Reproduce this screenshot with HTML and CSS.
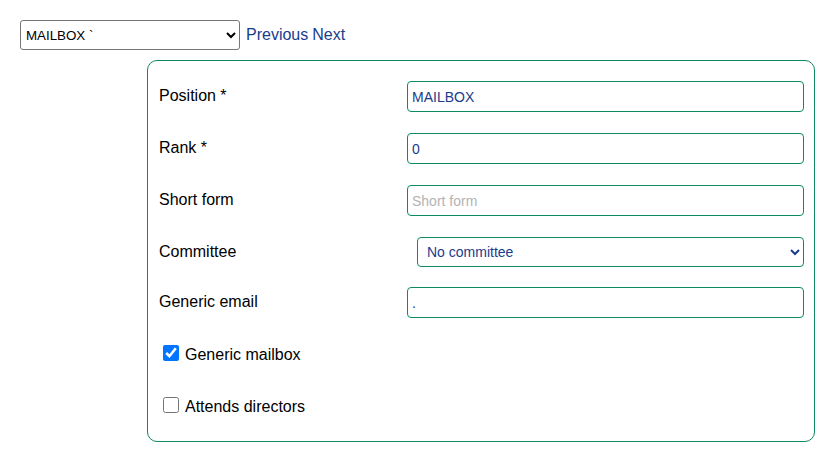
FILE: index.html
```html
<!DOCTYPE html>
<html lang="en">
<head>
<meta charset="utf-8">
<title>Position</title>
<link rel="stylesheet" href="styles.css">
</head>
<body>
<div class="topbar">
  <select class="picker">
    <option>MAILBOX `</option>
  </select>
  <a class="nav" href="#">Previous</a>
  <a class="nav" href="#">Next</a>
</div>
<form class="card">
  <div class="row">
    <label class="lbl">Position *</label>
    <input class="field" type="text" value="MAILBOX">
  </div>
  <div class="row">
    <label class="lbl">Rank *</label>
    <input class="field" type="text" value="0">
  </div>
  <div class="row">
    <label class="lbl">Short form</label>
    <input class="field" type="text" placeholder="Short form">
  </div>
  <div class="row row-select">
    <label class="lbl">Committee</label>
    <select class="field sel">
      <option>No committee</option>
    </select>
  </div>
  <div class="row">
    <label class="lbl">Generic email</label>
    <input class="field" type="text" value=".">
  </div>
  <div class="row check-row">
    <label class="check"><input type="checkbox" checked><span>Generic mailbox</span></label>
  </div>
  <div class="row check-row last">
    <label class="check"><input type="checkbox"><span>Attends directors</span></label>
  </div>
</form>
</body>
</html>
```
FILE: styles.css
```css
html, body {
  margin: 0;
  padding: 0;
  background: #ffffff;
}
body {
  font-family: "Liberation Sans", Arial, sans-serif;
  font-size: 16px;
  color: #000;
  padding: 20px;
}
.topbar {
  display: flex;
  align-items: center;
  height: 30px;
  gap: 4px;
}
.picker {
  width: 220px;
  height: 30px;
  font-family: "Liberation Sans", Arial, sans-serif;
  font-size: 13.33px;
  color: #000;
  border: 1px solid #767676;
  border-radius: 3px;
  background: #fff;
  padding: 0 1px;
  margin-right: 2px;
}
.nav {
  color: #1a3c8c;
  text-decoration: none;
  font-size: 16px;
}
.card {
  box-sizing: border-box;
  width: 668px;
  margin: 10px 0 0 127px;
  border: 1px solid #0e8a5f;
  border-radius: 10px;
  padding: 20px 10px 19px 11px;
}
.row {
  display: flex;
  align-items: center;
  height: 31px;
  margin-bottom: 21px;
}
.row-select {
  height: 30px;
  margin-bottom: 20px;
}
.row.last {
  margin-bottom: 0;
}
.lbl {
  width: 248px;
  flex: none;
  font-size: 16px;
  padding-bottom: 2px;
}
.row-select .lbl {
  padding-bottom: 0;
}
.field {
  box-sizing: border-box;
  flex: 1;
  height: 31px;
  border: 1px solid #0e8a5f;
  border-radius: 4px;
  padding: 0 4px;
  font-family: "Liberation Sans", Arial, sans-serif;
  font-size: 14px;
  color: #1a3c8c;
  background: #fff;
  outline: none;
}
.field::placeholder {
  color: #b3b3b3;
}
.sel {
  height: 30px;
  margin-left: 10px;
  margin-right: 0;
  padding: 0 4px 0 5px;
}
.check {
  display: flex;
  align-items: center;
  font-size: 16px;
}
.check input {
  width: 16px;
  height: 16px;
  margin: 0 6px 4px 4px;
  accent-color: #0075ff;
}
```
